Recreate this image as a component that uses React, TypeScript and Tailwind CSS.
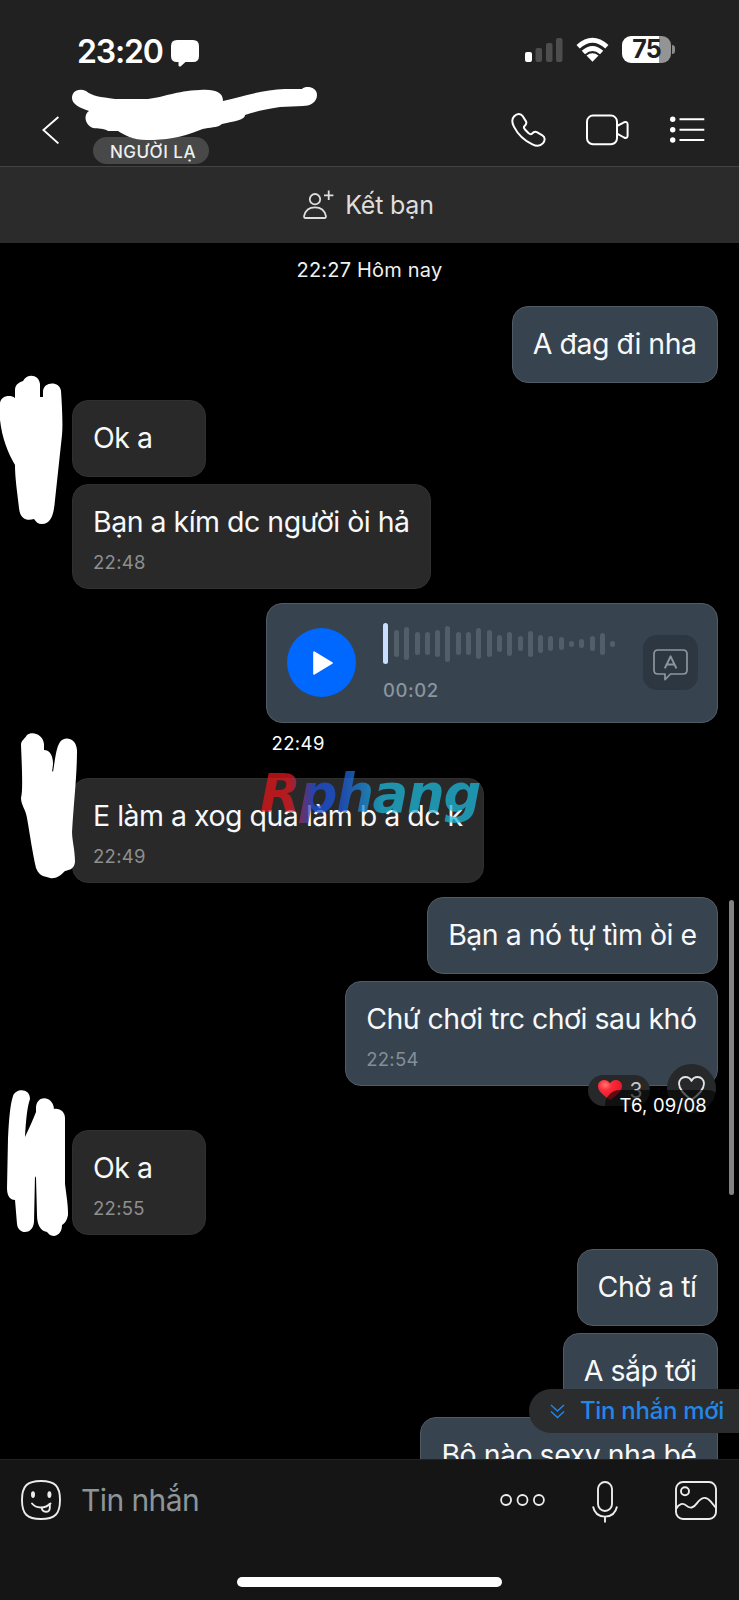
import { clsx } from 'clsx'

type Message = {
  text: string
  mine?: boolean
  time?: string
  gap: string
  size?: string
}

const before: Message[] = [
  { text: 'A đag đi nha', mine: true, gap: 'mt-0' },
  { text: 'Ok a', gap: 'mt-[17px]', size: 'w-[134px]' },
  { text: 'Bạn a kím dc người òi hả', time: '22:48', gap: 'mt-[7px]' },
]

const after: Message[] = [
  { text: 'E làm a xog qua làm b a dc k', time: '22:49', gap: 'mt-[19px]' },
  { text: 'Bạn a nó tự tìm òi e', mine: true, gap: 'mt-[14px]' },
  { text: 'Chứ chơi trc chơi sau khó', mine: true, time: '22:54', gap: 'mt-[7px]' },
  { text: 'Ok a', time: '22:55', gap: 'mt-[44px]', size: 'w-[134px]' },
  { text: 'Chờ a tí', mine: true, gap: 'mt-[14px]' },
  { text: 'A sắp tới', mine: true, gap: 'mt-[7px]' },
  { text: 'Bộ nào sexy nha bé', mine: true, gap: 'mt-[7px]' },
]

// bar heights of the voice message
const wave = [27, 33, 23, 23, 27, 36, 23, 23, 31, 27, 17, 24, 15, 26, 18, 15, 13, 6, 9, 15, 22, 6]

function Bubble({ text, mine, time, gap, size }: Message) {
  return (
    <div
      className={clsx(
        'shrink-0 rounded-[16px] border pl-5 pr-[20.5px] pt-[19px]',
        time ? 'h-[105px]' : 'h-[77px]',
        mine ? 'self-end border-[#515b66] bg-[#37434f]' : 'self-start border-[#303030] bg-[#292929]',
        gap,
        size,
      )}
    >
      <p className="whitespace-nowrap text-[28.5px] leading-[36px] tracking-[-0.5px] text-[#f6f8fa]">{text}</p>
      {time && (
        <p className={clsx('mt-[10px] text-[18.5px] leading-6 tracking-[0.3px]', mine ? 'text-[#848e96]' : 'text-[#8e8e8e]')}>
          {time}
        </p>
      )}
    </div>
  )
}

function StatusBar() {
  return (
    <div className="flex h-[90px] items-start justify-between pl-[77px] pr-[64px] pt-[33px]">
      <div className="flex items-center gap-2">
        <span className="pt-[2px] text-[32px] font-semibold leading-[34px] tracking-[-1.2px]">23:20</span>
        <svg className="mt-[5px] h-[27px] w-7" viewBox="0 0 28 27" fill="currentColor">
          <path d="M6 0H22Q28 0 28 6V16Q28 22 22 22H14.5L9.5 26.4Q7.5 27 7.5 25V22H6Q0 22 0 16V6Q0 0 6 0Z" />
        </svg>
      </div>
      <div className="flex items-center pt-[3px]">
        <svg className="h-[25px] w-[38px]" viewBox="0 0 38 25">
          <rect x="0" y="15" width="7" height="10" rx="2" fill="#fff" />
          <rect x="10.5" y="11" width="6.5" height="14" rx="2" fill="#4d4d4d" />
          <rect x="21" y="6" width="6.5" height="19" rx="2" fill="#4d4d4d" />
          <rect x="31" y="1" width="6.5" height="24" rx="2" fill="#4d4d4d" />
        </svg>
        <svg className="ml-[13px] h-[25px] w-[33px]" viewBox="0 0 34 25" fill="none" stroke="#fff" strokeWidth="5">
          <path d="M2.2 9.6Q17 -3.8 31.8 9.6" />
          <path d="M7.6 15.6Q17 7.2 26.4 15.6" />
          <path d="M10.8 18.8Q17 14 23.2 18.8L17 25Z" fill="#fff" stroke="none" />
        </svg>
        <div className="ml-[13px] flex h-[27px] w-[49px] items-center justify-center rounded-[9px] bg-[linear-gradient(90deg,#fff_76%,#949494_76%)] text-[25px] font-bold leading-none tracking-[-0.8px] text-[#212121]">
          75
        </div>
        <div className="ml-px h-[9px] w-[3px] rounded-r-full bg-[#8a8a8a]" />
      </div>
    </div>
  )
}

function Header() {
  return (
    <header className="relative h-[167px] border-b border-[#424242] bg-[#212121] text-white">
      <StatusBar />
      <div className="flex h-[76px] items-start pl-[42px] pr-[34px]">
        <svg className="mt-[26px] h-7 w-[17px]" viewBox="0 0 17 28" fill="none" stroke="#fff" strokeWidth="1.9">
          <path d="M16.4 1L1.4 14L16.4 27.4" />
        </svg>
        <div className="ml-[34px] mt-[47px] flex h-[27px] w-[116px] items-center justify-center rounded-full bg-[#484848] pt-[3px] text-[17px] font-medium leading-none tracking-[0.5px] text-[#efefef]">
          <span className="ml-[4px] whitespace-nowrap">NGƯỜI LẠ</span>
        </div>
        <div className="ml-auto flex items-start pt-[23px]" aria-label="Call actions">
          <svg className="h-[34px] w-[35px]" viewBox="0 0 35 34" fill="none" stroke="#fff" strokeWidth="2" strokeLinejoin="round">
            <path d="M3.2 3.2C6 .3 9.8 .3 11.6 3L15 8.4C16 10.2 15.4 11.4 13.4 13.2C12.4 14.2 12.8 15.2 14.2 16.8L17.4 20C19 21.3 20 21.6 20.9 20.7C22.8 18.7 24 18.2 25.8 19.2L31.4 22.4C34.4 24.2 34.2 27.8 31.8 30.4C29.2 33.2 25.4 33.4 21.4 31.4C13.4 27.6 6.6 20.8 2.9 13.6C.6 9 .6 5.9 3.2 3.2Z" />
          </svg>
          <svg className="ml-[40px] mt-px h-[32px] w-[43px]" viewBox="0 0 43 32" fill="none" stroke="#fff" strokeWidth="2" strokeLinejoin="round">
            <rect x="1" y="1.6" width="30" height="28.6" rx="6" />
            <path d="M31 12L38 8.3Q41.6 7 41.6 10.6V21.4Q41.6 25 38 23.5L31 19.6" />
          </svg>
          <svg className="ml-[41px] mt-[3px] h-[28px] w-[35px]" viewBox="0 0 35 28" fill="none" stroke="#fff" strokeWidth="2">
            <path d="M9.5 3.3H34.3M9.5 13.7H34.3M9.5 24H34.3" />
            <g fill="#fff" stroke="none">
              <circle cx="2.7" cy="3.3" r="2.7" />
              <circle cx="2.7" cy="13.7" r="2.7" />
              <circle cx="2.7" cy="24" r="2.7" />
            </g>
          </svg>
        </div>
      </div>
      <svg className="absolute left-0 top-0 h-[166px] w-[330px]" viewBox="0 0 330 166" fill="#fff">
        <path d="M72 98C72 90 80 88 86 91C92 96 100 97 115 99L148 99C165 97 175 91 200 90C215 89 223 92 223 101C240 97 262 90 285 89L302 89C306 85 317 87 317 95C317 103 309 106 303 106L280 107C265 109 255 112 245 115C245 120 235 121 222 124L219 126C215 128 207 127 200 130C180 138 165 140 147 140C133 140 124 135 118 131L108 131C104 128 98 129 93 128C85 125 83 115 89 111C80 108 72 104 72 98Z" />
      </svg>
    </header>
  )
}

function FriendBar() {
  return (
    <div className="flex h-[76px] items-center justify-center bg-[#2b2b2b] pr-[2px] text-[#dedede]">
      <svg className="h-[30px] w-[31px]" viewBox="0 0 31 30" fill="none" stroke="currentColor" strokeWidth="1.8" strokeLinejoin="round">
        <circle cx="12" cy="9.2" r="5.2" />
        <path d="M2.5 28Q.8 28 1.1 26C2.4 20.4 6.6 17.4 12 17.4C17.4 17.4 21.6 20.4 22.9 26Q23.2 28 21.5 28Z" />
        <path d="M25.7 .6V10M21 5.3H30.4" />
      </svg>
      <span className="ml-[11px] pt-px text-[25px] leading-none tracking-[-0.2px]">Kết bạn</span>
    </div>
  )
}

function VoiceMessage() {
  return (
    <div className="mt-[14px] flex h-[120px] w-[452px] shrink-0 self-end rounded-[16px] border border-[#515b66] bg-[#37434f] pl-[19.5px] pr-[19px]">
      <button className="mt-[24px] flex h-[69px] w-[69px] items-center justify-center rounded-full bg-[#0068ff]" aria-label="Play">
        <svg className="ml-[3px] h-6 w-5" viewBox="0 0 21 25" fill="#fff" stroke="#fff" strokeWidth="2" strokeLinejoin="round">
          <path d="M1.2 1.2L19.8 12.5L1.2 23.8Z" />
        </svg>
      </button>
      <div className="ml-[27.5px] pt-[19px]">
        <div className="flex h-[41px] items-center">
          <span className="mr-[6px] h-[41px] w-[5px] rounded-full bg-[#c8e0ff]" />
          <div className="flex items-center gap-[5.3px]">
            {wave.map((h, i) => (
              <span key={i} className="w-[5px] rounded-full bg-[#525f69]" style={{ height: h }} />
            ))}
          </div>
        </div>
        <p className="mt-[14px] text-[18.5px] font-medium leading-6 tracking-[0.6px] text-[#8b959d]">00:02</p>
      </div>
      <button className="ml-auto mt-[31px] flex h-[55px] w-[55px] items-center justify-center rounded-[14px] bg-[#2d3741]" aria-label="Transcribe">
        <svg className="mt-[4px] h-[32px] w-[35px]" viewBox="0 0 35 32" fill="none" stroke="#8d959c" strokeWidth="1.7" strokeLinejoin="round">
          <path d="M5 1H30Q34 1 34 5V21Q34 25 30 25H17.5L12 30.6V25H5Q1 25 1 21V5Q1 1 5 1Z" />
          <path d="M11.8 19.4L17.6 7.4L23.4 19.4M13.8 15.4H21.4" strokeWidth="2" />
        </svg>
      </button>
    </div>
  )
}

function Reactions() {
  return (
    <>
      <div className="absolute left-[587.5px] top-[832px] flex h-[31px] w-[62px] items-center rounded-full bg-[#26282a] pl-[10px]">
        <svg className="mb-[2px] h-[20px] w-6" viewBox="0 0 24 20">
          <defs>
            <radialGradient id="heart" cx="0.3" cy="0.25" r="0.8">
              <stop offset="0" stopColor="#ff7470" />
              <stop offset="0.35" stopColor="#fb2b37" />
              <stop offset="1" stopColor="#e4142a" />
            </radialGradient>
          </defs>
          <path d="M12 20C5 15 0 11.2 0 6C0 2.4 2.8 0 6.2 0C8.8 0 11 1.3 12 3.4C13 1.3 15.2 0 17.8 0C21.2 0 24 2.4 24 6C24 11.2 19 15 12 20Z" fill="url(#heart)" />
        </svg>
        <span className="ml-[8px] text-[21px] leading-none text-[#c4c6c8]">3</span>
      </div>
      <div className="absolute left-[666.5px] top-[821px] flex h-[49px] w-[49px] items-center justify-center rounded-full bg-[#26282a]">
        <svg className="h-[25px] w-[27px]" viewBox="0 0 27 25" fill="none" stroke="#e4e4e4" strokeWidth="1.8" strokeLinejoin="round">
          <path d="M13.5 24C6 18.2 1 13.6 1 7.8C1 3.8 3.8 1 7.3 1C10 1 12.4 2.4 13.5 5C14.6 2.4 17 1 19.7 1C23.2 1 26 3.8 26 7.8C26 13.6 21 18.2 13.5 24Z" />
        </svg>
      </div>
      <div className="absolute left-[605px] top-[847px] flex h-[30px] w-[117px] items-center rounded-full bg-black/60 pl-[14.5px] text-[18.5px] leading-none tracking-[0.2px] text-white">
        T6, 09/08
      </div>
    </>
  )
}

function Scribbles() {
  return (
    <svg className="absolute left-0 top-0 h-[1216px] w-20" viewBox="0 243 80 1216" fill="#fff">
      <path d="M0 404C0 396 10 394 15 398V390C15 384 20 382 23 381C27 373 39 374 40 384V397H43V392C43 381 60 381 61 391C62 405 63 425 62 435L55 500C54 512 52 524 42 524C38 524 36 522 34 519C28 521 20 520 19 508C17 490 15 478 15 465C8 453 2 438 0 420Z" />
      <path d="M21 745C21 740 25 739 27 735C32 731 43 734 44 744V750C50 750 53 756 53 764C52 774 52 770 53 772C55 760 56 748 60 742C64 736 76 737 77 750C77 775 74 800 72 832C72 840 75 850 75 862C74 870 68 870 65 871C60 876 56 879 50 878C46 876 40 878 36 868C32 850 30 835 27 818C26 810 21 805 21 798C23 790 22 770 21 745Z" />
      <path d="M8 1138C9 1120 10 1105 13 1096C16 1088 30 1088 30 1099C27 1108 26 1120 25 1137C29 1128 33 1120 36 1112V1108C36 1095 53 1095 54 1109C60 1108 65 1112 65 1118V1184C67 1200 68 1205 68 1215C67 1221 64 1224 62 1225C62 1230 60 1235 54 1236C50 1236 48 1233 47 1232C40 1231 37 1224 37 1215L36 1178L35 1176L34 1222C33 1235 18 1235 17 1224L15 1200C10 1200 7 1196 7 1188Z" />
    </svg>
  )
}

function Composer() {
  return (
    <footer className="h-[141px] border-t border-[#232323] bg-[#151515]">
      <div className="flex h-[80px] items-center pl-[21px] pr-[22px] text-[#ececec]">
        <svg className="h-10 w-10" viewBox="0 0 40 40" fill="none" stroke="currentColor" strokeWidth="1.9" strokeLinecap="round">
          <path d="M20 1C34 1 39 6 39 20C39 34 34 39 20 39C6 39 1 34 1 20C1 6 6 1 20 1Z" />
          <path d="M11 23.5C15 28.5 24 29 29.5 23.5" />
          <path d="M20.8 27.8C21 33 28.6 33.2 28.8 28C29 26.4 28.8 24.8 28.4 24.2" />
          <ellipse cx="12" cy="14.6" rx="2" ry="3.4" fill="currentColor" stroke="none" />
          <ellipse cx="28.4" cy="14.6" rx="2" ry="3.4" fill="currentColor" stroke="none" />
        </svg>
        <span className="ml-[20px] text-[30px] leading-none tracking-[-0.6px] text-[#8d9599]">Tin nhắn</span>
        <svg className="ml-auto h-3 w-[46px]" viewBox="0 0 46 12" fill="none" stroke="currentColor" strokeWidth="1.8">
          <circle cx="6.1" cy="6" r="5" />
          <circle cx="22.5" cy="6" r="5" />
          <circle cx="38.9" cy="6" r="5" />
        </svg>
        <svg className="ml-[46px] mt-[3px] h-[42px] w-[26px]" viewBox="0 0 26 42" fill="none" stroke="currentColor" strokeWidth="1.9">
          <rect x="6" y="1" width="14" height="29" rx="7" />
          <path d="M1 25.5C2.5 32.5 7 35.6 13 35.6C19 35.6 23.5 32.5 25 25.5M13 35.6V41.5" />
        </svg>
        <svg className="ml-[57px] h-[39px] w-[42px]" viewBox="0 0 42 39" fill="none" stroke="currentColor" strokeWidth="1.9">
          <rect x="1" y="1" width="40" height="37" rx="7" />
          <circle cx="10" cy="10.3" r="4" />
          <path d="M1 28C4 22.6 8 21.6 11 24.4C15 28 18.6 27 21.8 22.4C27 15.2 31.6 15.6 35.6 20.4L41 27" />
        </svg>
      </div>
      <div className="mx-auto mt-[37px] h-[10px] w-[265px] rounded-full bg-white" />
    </footer>
  )
}

export default function App() {
  return (
    <div className="flex h-[1600px] w-[739px] flex-col overflow-hidden bg-black font-['Inter',sans-serif]">
      <Header />
      <FriendBar />
      <main className="relative flex h-[1216px] flex-col overflow-hidden pl-[72px] pr-[21px]">
        <p className="-ml-[51px] mb-[21px] mt-[12px] text-center text-[20px] leading-[30px] tracking-[0.2px] text-[#f0f0f0]">22:27 Hôm nay</p>
        {before.map((m) => (
          <Bubble key={m.text} {...m} />
        ))}
        <VoiceMessage />
        <p className="mb-[2px] ml-[199.5px] mt-[6px] h-7 text-[18.5px] leading-7 tracking-[0.4px] text-white">22:49</p>
        {after.map((m) => (
          <Bubble key={m.text} {...m} />
        ))}

        <Scribbles />
        <Reactions />
        <div className="absolute left-[260px] top-[519px] bg-[linear-gradient(90deg,#e01414_0%,#e01820_13%,#1b50e0_24%,#1b58d8_36%,#1cb7d8_54%,#1cb7d8_100%)] bg-clip-text pr-2 font-['DejaVu_Sans'] text-[53px] font-bold italic leading-[64px] tracking-[-1.3px] text-transparent opacity-75">
          Rphang
        </div>
        <div className="absolute right-[5px] top-[657px] h-[295px] w-[5px] rounded-full bg-[#828282]" />
        <div className="absolute right-0 top-[1146px] flex h-11 w-[210px] items-center rounded-l-full bg-[#2a2c2d] pl-[21px] text-[#2387ea]">
          <svg className="h-[15px] w-[15px]" viewBox="0 0 15 15" fill="none" stroke="currentColor" strokeWidth="1.4">
            <path d="M1 1L7.5 7L14 1M1 7.6L7.5 13.6L14 7.6" />
          </svg>
          <span className="ml-[15px] whitespace-nowrap text-[24px] font-medium leading-none tracking-[-0.3px]">Tin nhắn mới</span>
        </div>
      </main>
      <Composer />
    </div>
  )
}
